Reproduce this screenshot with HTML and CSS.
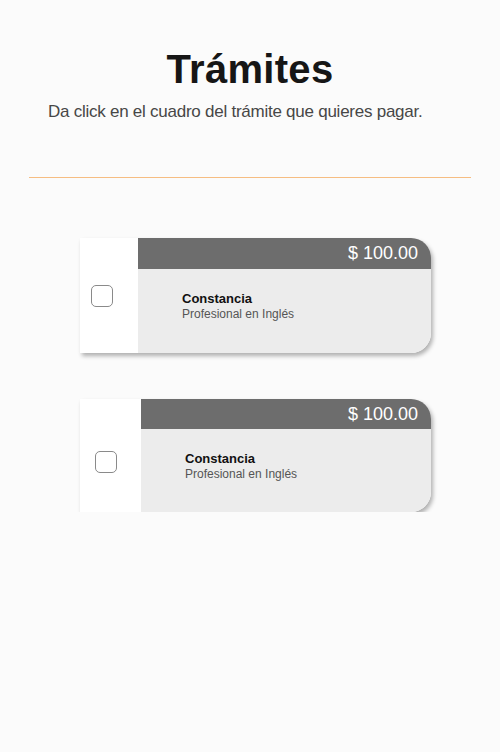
FILE: index.html
```html
<!DOCTYPE html>
<html lang="es">
<head>
    <meta charset="UTF-8">
    <meta name="viewport" content="width=device-width, initial-scale=1.0">
    <title>Trámites</title>
    <link rel="stylesheet" href="styles.css">
</head>
<body>

    <div class="page">
        <h1 class="titulo">Trámites</h1>
        <p class="instrucciones">Da click en el cuadro del trámite que quieres pagar.</p>
        <div class="separador"></div>

        <div class="lista-tramites">
            <label class="tramite">
                <div class="tramite-check">
                    <input type="checkbox" name="tramite1">
                </div>
                <div class="tramite-info">
                    <div class="tramite-precio">$ 100.00</div>
                    <div class="tramite-detalle">
                        <div class="tramite-nombre">Constancia</div>
                        <div class="tramite-desc">Profesional en Inglés</div>
                    </div>
                </div>
            </label>

            <label class="tramite tramite-alt">
                <div class="tramite-check">
                    <input type="checkbox" name="tramite2">
                </div>
                <div class="tramite-info">
                    <div class="tramite-precio">$ 100.00</div>
                    <div class="tramite-detalle">
                        <div class="tramite-nombre">Constancia</div>
                        <div class="tramite-desc">Profesional en Inglés</div>
                    </div>
                </div>
            </label>
        </div>
    </div>

</body>
</html>
```

FILE: styles.css
```css
body {
    margin: 0;
    background-color: #fbfbfb;
    font-family: "Liberation Sans", Arial, sans-serif;
    color: #1a1a1a;
}
.page {
    padding-top: 46px;
}
.titulo {
    margin: 0;
    font-size: 40px;
    line-height: 46px;
    font-weight: bold;
    letter-spacing: 0.3px;
    text-align: center;
    color: #161616;
}
.instrucciones {
    margin: 10px 0 0 48px;
    font-size: 17px;
    line-height: 20px;
    letter-spacing: -0.25px;
    color: #474747;
}
.separador {
    margin: 55px 29px 0;
    border-top: 1px solid #f6bd82;
}
.lista-tramites {
    display: flex;
    flex-direction: column;
    gap: 46px;
    padding: 60px 69px 0 80px;
}
.tramite {
    display: flex;
    height: 115px;
    background-color: #fff;
    border-radius: 0 20px 20px 0;
    box-shadow: 2px 3px 4px rgba(0, 0, 0, 0.3);
    cursor: pointer;
}
.tramite-check {
    width: 58px;
    padding: 47px 0 0 11px;
    box-sizing: border-box;
}
.tramite-check input {
    appearance: none;
    margin: 0;
    width: 22px;
    height: 22px;
    border: 1px solid #8a8a8a;
    border-radius: 5px;
    background-color: #fff;
}
.tramite-check input:checked {
    background-color: #6d6d6d;
}
.tramite-info {
    flex: 1;
    display: flex;
    flex-direction: column;
    border-radius: 0 20px 20px 0;
    overflow: hidden;
    background-color: #ececec;
}
.tramite-precio {
    height: 31px;
    line-height: 31px;
    padding-right: 13px;
    text-align: right;
    font-size: 18px;
    color: #fff;
    background-color: #6d6d6d;
}
.tramite-detalle {
    padding: 22px 0 0 44px;
}
.tramite-nombre {
    font-size: 13px;
    line-height: 16px;
    font-weight: bold;
    color: #111;
}
.tramite-desc {
    font-size: 12px;
    line-height: 15px;
    color: #555;
}
.tramite-alt {
    height: 113px;
}
.tramite-alt .tramite-check {
    width: 61px;
    padding: 52px 0 0 15px;
}
.tramite-alt .tramite-precio {
    height: 30px;
    line-height: 30px;
}
```
